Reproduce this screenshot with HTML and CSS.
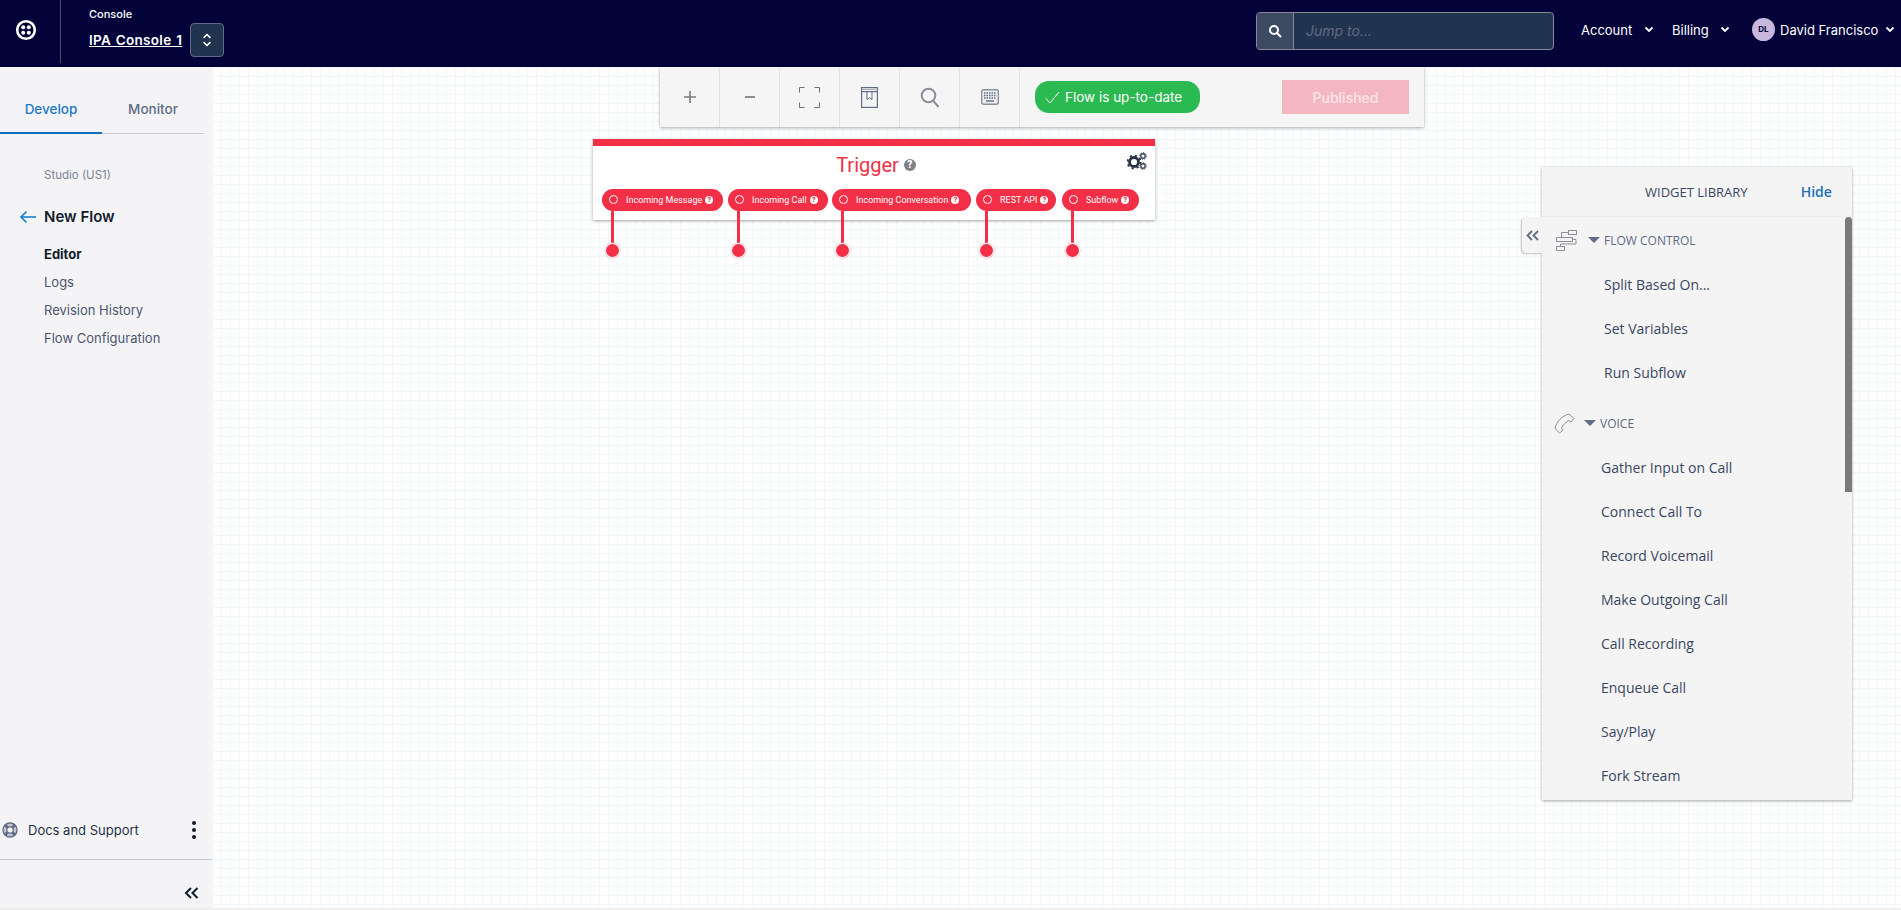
FILE: index.html
```html
<!DOCTYPE html>
<html lang="en">
<head>
    <meta charset="UTF-8">
    <meta name="viewport" content="width=device-width, initial-scale=1.0">
    <title>Studio Flow - Twilio Console</title>
    <link rel="stylesheet" href="styles.css">
</head>
<body>

    <!-- Top bar -->
    <header class="topbar">
        <div class="logo-cell">
            <svg width="22" height="22" viewBox="0 0 22 22" fill="none">
                <circle cx="11" cy="11" r="8.8" stroke="#fff" stroke-width="2.6"/>
                <circle cx="8.2" cy="8.2" r="2" fill="#fff"/>
                <circle cx="13.8" cy="8.2" r="2" fill="#fff"/>
                <circle cx="8.2" cy="13.8" r="2" fill="#fff"/>
                <circle cx="13.8" cy="13.8" r="2" fill="#fff"/>
            </svg>
        </div>
        <div class="account-cell">
            <div class="account-label">Console</div>
            <div class="account-row">
                <a class="account-name">IPA Console 1</a>
                <button class="account-switch">
                    <svg width="10" height="16" viewBox="0 0 10 16" fill="none" stroke="#fff" stroke-width="1.6" stroke-linecap="round" stroke-linejoin="round">
                        <path d="M2 5.5 5 2.5 8 5.5"/>
                        <path d="M2 10.5 5 13.5 8 10.5"/>
                    </svg>
                </button>
            </div>
        </div>
        <div class="search-box">
            <span class="search-icon">
                <svg width="14" height="14" viewBox="0 0 14 14" fill="none" stroke="#fff" stroke-width="2" stroke-linecap="round">
                    <circle cx="6" cy="6" r="4"/>
                    <path d="M9 9 12.5 12.5"/>
                </svg>
            </span>
            <span class="search-input">Jump to...</span>
        </div>
        <nav class="top-links">
            <a class="top-link top-link-account">Account <svg class="chev" width="10" height="7" viewBox="0 0 10 7" fill="none" stroke="#fff" stroke-width="1.8"><path d="M1.5 1.5 5 5 8.5 1.5"/></svg></a>
            <a class="top-link top-link-billing">Billing <svg class="chev" width="10" height="7" viewBox="0 0 10 7" fill="none" stroke="#fff" stroke-width="1.8"><path d="M1.5 1.5 5 5 8.5 1.5"/></svg></a>
            <a class="top-link top-link-user"><span class="avatar">DL</span>David Francisco <svg class="chev" width="10" height="7" viewBox="0 0 10 7" fill="none" stroke="#fff" stroke-width="1.8"><path d="M1.5 1.5 5 5 8.5 1.5"/></svg></a>
        </nav>
    </header>

    <div class="main">
        <!-- Sidebar -->
        <aside class="sidebar">
            <div class="tabs">
                <div class="tab tab-active">Develop</div>
                <div class="tab">Monitor</div>
            </div>
            <div class="side-nav">
                <div class="side-section">Studio (US1)</div>
                <div class="side-title">
                    <svg width="18" height="14" viewBox="0 0 18 14" fill="none" stroke="#0f7fd0" stroke-width="1.6"><path d="M17 7H2"/><path d="M7.5 1.5 2 7l5.5 5.5"/></svg>
                    New Flow
                </div>
                <a class="side-link side-link-active">Editor</a>
                <a class="side-link">Logs</a>
                <a class="side-link">Revision History</a>
                <a class="side-link">Flow Configuration</a>
            </div>
            <div class="side-docs">
                <svg width="16" height="16" viewBox="0 0 16 16" fill="none" stroke="#606b85">
                    <circle cx="8" cy="8" r="5" stroke="#c3c6d0" stroke-width="3"/>
                    <path d="M2.800 2.800 5.800 5.800M13.200 2.800 10.200 5.800M2.800 13.200 5.800 10.200M13.200 13.200 10.200 10.200" stroke-width="3"/>
                    <circle cx="8" cy="8" r="7" stroke-width="1.400"/>
                    <circle cx="8" cy="8" r="3.200" fill="#f4f4f6" stroke-width="1.200"/>
                </svg>
                <span class="docs-text">Docs and Support</span>
                <span class="docs-dots"><i></i><i></i><i></i></span>
            </div>
            <div class="side-collapse">
                <svg width="15" height="12" viewBox="0 0 15 12" fill="none" stroke="#121c2d" stroke-width="2"><path d="M7 1 2 6l5 5"/><path d="M13.5 1 8.500 6l5 5"/></svg>
            </div>
        </aside>

        <!-- Canvas -->
        <section class="canvas">
            <div class="toolbar">
                <div class="tool">
                    <svg width="14" height="14" viewBox="0 0 14 14" stroke="#7b7b7b" stroke-width="1.6"><path d="M7 1v12M1 7h12"/></svg>
                </div>
                <div class="tool">
                    <svg width="12" height="14" viewBox="0 0 12 14" stroke="#8c8c8c" stroke-width="2"><path d="M1 7h10"/></svg>
                </div>
                <div class="tool">
                    <svg width="21" height="21" viewBox="0 0 21 21" fill="none" stroke="#6e6e6e" stroke-width="1"><path d="M.5 5.500V.5h5M15.500.5h5v5M.5 15.500v5h5M15.500 20.500h5v-5"/></svg>
                </div>
                <div class="tool">
                    <svg width="17" height="21" viewBox="0 0 17 21" fill="none" stroke="#606b85" stroke-width="1.2"><rect x=".6" y=".6" width="15.800" height="19.800"/><path d="M.6 4.600h15.800"/><path d="M2 2.400h13" stroke="#a0a5b3" stroke-width="1"/><path d="M6 4.600v8l2.500-2 2.500 2v-8" stroke-width="1"/></svg>
                </div>
                <div class="tool">
                    <svg width="20" height="21" viewBox="0 0 20 21" fill="none" stroke="#8a8f99" stroke-width="2"><circle cx="8.500" cy="8.500" r="6.800"/><path d="M13 13.500 18.500 20"/></svg>
                </div>
                <div class="tool">
                    <svg width="18" height="16" viewBox="0 0 18 16"><rect x=".7" y=".7" width="16.600" height="14.600" rx="2" fill="#eeeef3" stroke="#8a8f99" stroke-width="1.4"/><path d="M3 4h12M3 6.500h12M3 9h12" stroke="#606b85" stroke-width="1.400" stroke-dasharray="1.500 1"/><path d="M5 12h8" stroke="#606b85" stroke-width="1.400"/></svg>
                </div>
                <div class="flow-status">
                    <svg width="15" height="13" viewBox="0 0 15 13" fill="none" stroke="#fff" stroke-width="1"><path d="M1 7.500 5 12 14 1"/></svg>
                    Flow is up-to-date
                </div>
                <button class="publish-btn">Published</button>
            </div>

            <!-- Trigger widget -->
            <div class="trigger">
                <div class="trigger-head">
                    <span class="trigger-title">Trigger</span>
                    <span class="help-dot help-dot-title">?</span>
                    <svg class="trigger-gears" width="20" height="18" viewBox="0 0 20 18">
                        <circle cx="7" cy="10" r="4.500" fill="none" stroke="#2c3345" stroke-width="2.800"/>
                        <circle cx="7" cy="10" r="6.500" fill="none" stroke="#2c3345" stroke-width="1.800" stroke-dasharray="2.200 2.900"/>
                        <circle cx="16" cy="4" r="2.200" fill="none" stroke="#3d4a63" stroke-width="1.400"/>
                        <circle cx="16" cy="4" r="3.400" fill="none" stroke="#3d4a63" stroke-width="1" stroke-dasharray="1.300 1.300"/>
                        <circle cx="16" cy="14" r="2.200" fill="none" stroke="#3d4a63" stroke-width="1.400"/>
                        <circle cx="16" cy="14" r="3.400" fill="none" stroke="#3d4a63" stroke-width="1" stroke-dasharray="1.300 1.300"/>
                    </svg>
                </div>
                <div class="pills">
                    <div class="pill pill-message"><span class="ring"></span>Incoming Message<span class="help-dot">?</span><span class="stem"></span></div>
                    <div class="pill pill-call"><span class="ring"></span>Incoming Call<span class="help-dot">?</span><span class="stem"></span></div>
                    <div class="pill pill-conv"><span class="ring"></span>Incoming Conversation<span class="help-dot">?</span><span class="stem"></span></div>
                    <div class="pill pill-rest"><span class="ring"></span>REST API<span class="help-dot">?</span><span class="stem"></span></div>
                    <div class="pill pill-sub"><span class="ring"></span>Subflow<span class="help-dot">?</span><span class="stem"></span></div>
                </div>
            </div>

            <!-- Widget library -->
            <div class="library">
                <div class="lib-collapse">
                    <svg width="13" height="11" viewBox="0 0 13 11" fill="none" stroke="#606b85" stroke-width="1.800"><path d="M6 1 1.500 5.500 6 10"/><path d="M12 1 7.500 5.500 12 10"/></svg>
                </div>
                <div class="lib-head">
                    <span class="lib-title">WIDGET LIBRARY</span>
                    <a class="lib-hide">Hide</a>
                </div>
                <div class="lib-scrollbar"></div>
                <div class="lib-group lib-group-flow">
                    <svg width="21" height="21" viewBox="0 0 21 21" fill="none" stroke="#8a8f99"><rect x="12.500" y=".5" width="8" height="4"/><rect x=".5" y="7.500" width="16" height="4"/><rect x=".5" y="16.500" width="8" height="4"/><path d="M12.500 2.500H5.500v5M16.500 9.500h3.500v4.500H4.500v2.500"/></svg>
                    <span class="caret"></span>FLOW CONTROL
                </div>
                <a class="lib-item lib-item-flow">Split Based On...</a>
                <a class="lib-item lib-item-flow">Set Variables</a>
                <a class="lib-item lib-item-flow">Run Subflow</a>
                <div class="lib-group lib-group-voice">
                    <svg width="21" height="21" viewBox="0 0 21 21" fill="none" stroke="#8a8f99"><path d="M15 1 20 5.500 17 9 15 7.500C12 9 9 12 7.500 15L9 17 5.500 20 1 15.500C2 9 8 3 15 1Z"/></svg>
                    <span class="caret"></span>VOICE
                </div>
                <a class="lib-item">Gather Input on Call</a>
                <a class="lib-item">Connect Call To</a>
                <a class="lib-item">Record Voicemail</a>
                <a class="lib-item">Make Outgoing Call</a>
                <a class="lib-item">Call Recording</a>
                <a class="lib-item">Enqueue Call</a>
                <a class="lib-item">Say/Play</a>
                <a class="lib-item">Fork Stream</a>
            </div>
        </section>
    </div>

</body>
</html>
```

FILE: styles.css
```css
html, body {
    height: 100%;
}
body {
    font-family: Inter, "Liberation Sans", sans-serif;
    margin: 0;
    padding: 0;
    overflow: hidden;
    display: flex;
    flex-direction: column;
    color: #121c2d;
}
a {
    cursor: pointer;
}

/* Top bar */
.topbar {
    height: 67px;
    flex: none;
    background-color: #030339;
    color: white;
    display: flex;
    align-items: center;
}
.logo-cell {
    width: 52px;
    height: 63px;
    margin-bottom: 4px;
    padding-right: 8px;
    border-right: 1px solid #4b4d6b;
    display: flex;
    align-items: center;
    justify-content: center;
}
.logo-cell svg {
    margin-top: -4px;
}
.account-cell {
    margin-left: 28px;
    margin-bottom: 4px;
}
.account-label {
    font-size: 11px;
    font-weight: 500;
    line-height: 14px;
    margin-bottom: 2px;
}
.account-row {
    display: flex;
    align-items: center;
    gap: 8px;
}
.account-name {
    font-size: 13.500px;
    font-weight: 600;
    color: white;
    text-decoration: underline;
    letter-spacing: 0.3px;
    word-spacing: 1px;
}
.account-switch {
    width: 34px;
    height: 34px;
    background-color: #20344f;
    border: 1px solid #606b85;
    border-radius: 4px;
    padding: 0;
    display: flex;
    align-items: center;
    justify-content: center;
}
.search-box {
    margin-left: auto;
    width: 298px;
    height: 38px;
    margin-bottom: 5px;
    box-sizing: border-box;
    display: flex;
    background-color: #20344f;
    border: 1px solid #88889c;
    border-radius: 4px;
}
.search-icon {
    width: 36px;
    background-color: #3c4a62;
    border-right: 1px solid #88889c;
    border-radius: 3px 0 0 3px;
    display: flex;
    align-items: center;
    justify-content: center;
}
.search-input {
    font-size: 14px;
    font-style: italic;
    color: #606b85;
    line-height: 36px;
    margin-left: 12px;
}
.top-links {
    display: flex;
    align-items: center;
    margin-left: 27px;
    margin-bottom: 8px;
    width: 320px;
    flex: none;
}
.top-link {
    font-size: 13px;
    color: white;
    display: flex;
    align-items: center;
    white-space: pre;
}
.top-link-account {
    width: 91px;
}
.top-link-billing {
    width: 80px;
}
.chev {
    margin-left: 8px;
}
.top-link-user .chev {
    margin-left: 3px;
}
.avatar {
    width: 23px;
    height: 23px;
    margin-right: 5px;
    border-radius: 50%;
    background-color: #c8b8de;
    color: #030339;
    font-size: 8px;
    font-weight: 700;
    line-height: 23px;
    text-align: center;
}

.main {
    flex: 1;
    display: flex;
    min-height: 0;
    border-bottom: 2px solid #eeeeee;
}

/* Sidebar */
.sidebar {
    width: 212px;
    flex: none;
    background-color: #f4f4f6;
    display: flex;
    flex-direction: column;
}
.tabs {
    display: flex;
    width: 204px;
    margin-top: 24px;
    border-bottom: 1px solid #c8cad2;
}
.tab {
    width: 102px;
    height: 41px;
    text-align: center;
    font-size: 13.500px;
    font-weight: 500;
    line-height: 36px;
    color: #606b85;
}
.tab-active {
    color: #1c79c5;
    border-bottom: 2px solid #0f6fc0;
    margin-bottom: -1px;
}
.side-nav {
    padding-left: 44px;
    flex: 1;
}
.side-section {
    font-size: 11.500px;
    color: #7c8294;
    margin-top: 33px;
    line-height: 16px;
}
.side-title {
    position: relative;
    font-size: 15px;
    font-weight: 600;
    margin-top: 24px;
    line-height: 20px;
}
.side-title svg {
    position: absolute;
    left: -25px;
    top: 3px;
}
.side-link {
    display: block;
    font-size: 13px;
    color: #4b5671;
    line-height: 28px;
}
.side-link-active {
    font-weight: 700;
    color: #121c2d;
    margin-top: 13px;
}
.side-docs {
    height: 60px;
    box-sizing: border-box;
    padding-left: 2px;
    display: flex;
    align-items: center;
    border-bottom: 1px solid #c8cad2;
}
.docs-text {
    font-size: 13px;
    margin-left: 10px;
    color: #263146;
}
.docs-dots {
    margin-left: auto;
    margin-right: 16px;
    display: flex;
    flex-direction: column;
    gap: 3px;
}
.docs-dots i {
    display: block;
    width: 4px;
    height: 4px;
    border-radius: 50%;
    background-color: #121c2d;
}
.side-collapse {
    height: 48px;
    box-sizing: border-box;
    padding: 18px 13px 0 0;
    display: flex;
    align-items: center;
    justify-content: flex-end;
}

/* Canvas */
.canvas {
    flex: 1;
    position: relative;
    background-color: white;
    background-image:
        linear-gradient(to right, #eff6fc 1px, transparent 1px),
        linear-gradient(to bottom, #eff6fc 1px, transparent 1px);
    background-size: 9px 9px;
}

.toolbar {
    position: absolute;
    left: 448px;
    top: 0;
    width: 764px;
    height: 60px;
    background-color: #f5f5f5;
    box-shadow: 0 1px 3px rgba(0, 0, 0, 0.35);
    display: flex;
    align-items: center;
}
.tool {
    width: 60px;
    height: 60px;
    box-sizing: border-box;
    border-right: 1px solid #e3e3e3;
    display: flex;
    align-items: center;
    justify-content: center;
}
.flow-status {
    margin-left: 15px;
    width: 165px;
    height: 32px;
    box-sizing: border-box;
    padding-left: 10px;
    border-radius: 14px;
    background-color: #2bb952;
    color: white;
    font-size: 13.500px;
    display: flex;
    align-items: center;
    gap: 5px;
}
.publish-btn {
    margin-left: 82px;
    width: 127px;
    height: 34px;
    border: none;
    padding: 0;
    background-color: #f5b7bf;
    color: #fbe6e9;
    font-family: Inter, sans-serif;
    font-size: 14px;
    font-weight: 500;
}

/* Trigger widget */
.trigger {
    position: absolute;
    left: 381px;
    top: 72px;
    width: 562px;
    height: 81px;
    box-sizing: border-box;
    background-color: white;
    border-top: 7px solid #f22f46;
    box-shadow: 0 1px 3px rgba(0, 0, 0, 0.35);
    font-family: Roboto, sans-serif;
}
.trigger-head {
    position: relative;
    height: 43px;
    box-sizing: border-box;
    padding: 0 0 5px 4px;
    display: flex;
    align-items: center;
    justify-content: center;
    gap: 5px;
}
.trigger-title {
    font-size: 20px;
    color: #f22f46;
}
.trigger-gears {
    position: absolute;
    right: 8px;
    top: 6px;
}
.help-dot {
    display: inline-block;
    width: 8px;
    height: 8px;
    border-radius: 50%;
    background-color: white;
    color: #f22f46;
    font-size: 7px;
    font-weight: 900;
    line-height: 8px;
    text-align: center;
    margin-left: 3px;
}
.help-dot-title {
    width: 12px;
    height: 12px;
    margin-left: 0;
    background-color: #7d8288;
    color: white;
    font-size: 10px;
    line-height: 12px;
}
.pills {
    position: relative;
    height: 22px;
}
.pill {
    position: absolute;
    top: 0;
    height: 22px;
    padding-bottom: 1px;
    box-sizing: border-box;
    border-radius: 11px;
    background-color: #f22f46;
    color: white;
    font-size: 9px;
    font-weight: 400;
    display: flex;
    align-items: center;
    white-space: nowrap;
}
.ring {
    width: 9px;
    height: 9px;
    box-sizing: border-box;
    margin: 0 8px 0 7px;
    border: 1px solid white;
    border-radius: 50%;
}
.stem {
    position: absolute;
    left: 9px;
    top: 22px;
    width: 3px;
    height: 39px;
    background-color: #f22f46;
}
.stem::after {
    content: "";
    position: absolute;
    left: -5px;
    bottom: -7px;
    width: 13px;
    height: 13px;
    border-radius: 50%;
    background-color: #f22f46;
    box-shadow: 0 0 0 1px white, 0 0 0 1.500px #f9a9b3;
}
.pill-message { left: 9px; width: 121px; }
.pill-call { left: 135px; width: 100px; }
.pill-conv { left: 239px; width: 139px; }
.pill-rest { left: 383px; width: 80px; }
.pill-sub { left: 469px; width: 77px; }

/* Widget library */
.library {
    position: absolute;
    left: 1330px;
    top: 100px;
    width: 310px;
    height: 633px;
    background-color: #f4f4f4;
    box-shadow: 0 1px 3px rgba(0, 0, 0, 0.35);
    font-family: "Open Sans", sans-serif;
}
.lib-collapse {
    position: absolute;
    left: -20px;
    top: 50px;
    width: 20px;
    height: 36px;
    background-color: #f4f4f4;
    border-radius: 4px 0 0 4px;
    box-shadow: -1px 1px 2px rgba(0, 0, 0, 0.25);
    display: flex;
    align-items: center;
    justify-content: center;
}
.lib-head {
    height: 50px;
    box-sizing: border-box;
    border-bottom: 1px solid #eeeeee;
    position: relative;
    display: flex;
    align-items: center;
}
.lib-title {
    margin-left: 103px;
    font-size: 13px;
    color: #394762;
}
.lib-hide {
    margin-left: 53px;
    font-size: 14px;
    font-weight: 600;
    color: #1c6fb8;
}
.lib-scrollbar {
    position: absolute;
    right: 0;
    top: 50px;
    width: 7px;
    height: 275px;
    border-radius: 4px 4px 0 0;
    background-color: #7a7a7a;
}
.lib-group {
    display: flex;
    align-items: center;
    font-size: 12px;
    color: #606b85;
    height: 44px;
}
.lib-group-flow {
    margin-top: 1px;
    padding-left: 14px;
}
.lib-group-voice {
    margin-top: 7px;
    padding-left: 12px;
}
.caret {
    width: 0;
    height: 0;
    margin: 0 4px 0 11px;
    border-left: 6px solid transparent;
    border-right: 6px solid transparent;
    border-top: 6px solid #606b85;
}
.lib-group-voice .caret {
    margin-left: 9px;
}
.lib-item {
    display: block;
    font-size: 14px;
    color: #394762;
    line-height: 42px;
    padding: 2px 0 0 59px;
}
.lib-item-flow {
    padding-left: 62px;
}
```
